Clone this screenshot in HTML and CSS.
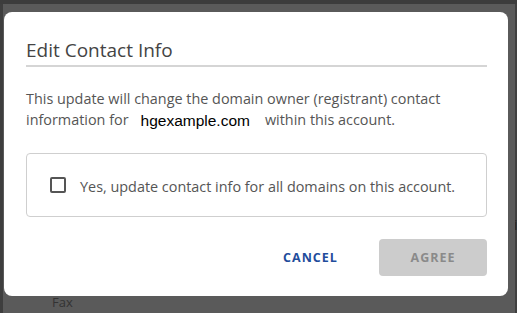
FILE: index.html
```html
<!DOCTYPE html>
<html>
<head>
<meta charset="utf-8">
<link rel="stylesheet" href="styles.css">
</head>
<body>
<div class="topbar"></div>
<div class="stage">
  <div class="leftstrip"></div>
  <div class="center">
    <div class="modal">
      <h2 class="title">Edit Contact Info</h2>
      <p class="text">This update will change the domain owner (registrant) contact information for<span class="domain">hgexample.com</span>within this account.</p>
      <label class="option">
        <span class="box"></span>
        <span class="option-text">Yes, update contact info for all domains on this account.</span>
      </label>
      <div class="actions">
        <button class="btn cancel">CANCEL</button>
        <button class="btn agree">AGREE</button>
      </div>
    </div>
    <div class="under">Fax</div>
  </div>
  <div class="rightstrip"><span class="peek">il</span></div>
</div>
</body>
</html>
```

FILE: styles.css
```css
html, body {
  margin: 0;
  padding: 0;
  width: 517px;
  height: 313px;
  overflow: hidden;
  background: #5a5a5a;
  font-family: "Open Sans", "Noto Sans", sans-serif;
}
.topbar {
  height: 4px;
  background: #3c3c3c;
}
.stage {
  display: flex;
  height: 309px;
}
.leftstrip {
  width: 3px;
  background: #3e3e3e;
  flex: none;
}
.rightstrip {
  flex: none;
  width: 3px;
  margin-left: 6px;
  background: #404040;
  overflow: hidden;
  padding-top: 213px;
}
.peek {
  display: block;
  margin-left: -1px;
  font-size: 14px;
  line-height: 16px;
  color: #222;
}
.center {
  flex: none;
  width: 505px;
  padding-left: 1px;
  padding-top: 8px;
}
.modal {
  box-sizing: border-box;
  width: 504px;
  height: 284px;
  background: #fff;
  border-radius: 8px;
  padding: 0 21px 0 22px;
  display: flex;
  flex-direction: column;
}
.title {
  margin: 0;
  padding-top: 26px;
  padding-bottom: 3px;
  font-size: 19px;
  font-weight: 400;
  color: #444;
  line-height: 24px;
  border-bottom: 2px solid #d5d5d5;
}
.text {
  margin: 21px 0 0;
  font-size: 14.4px;
  line-height: 21px;
  color: #555;
}
.domain {
  display: inline-block;
  font-family: "Liberation Sans", Arial, sans-serif;
  font-size: 15.5px;
  line-height: 17px;
  color: #000;
  margin: 0 15px 0 12px;
  position: relative;
  top: 1px;
}
.option {
  margin-top: 23px;
  box-sizing: border-box;
  height: 64px;
  border: 1px solid #cfcfcf;
  border-radius: 4px;
  display: flex;
  align-items: center;
  padding-left: 23px;
}
.box {
  box-sizing: border-box;
  width: 16px;
  height: 16px;
  border: 2px solid #555;
  border-radius: 2px;
  flex: none;
}
.option-text {
  margin-left: 14px;
  margin-top: 2px;
  font-size: 14.4px;
  line-height: 21px;
  color: #555;
}
.actions {
  margin-top: 22px;
  display: flex;
  justify-content: flex-end;
  align-items: center;
  gap: 24px;
}
.btn {
  font-family: "Open Sans", "Noto Sans", sans-serif;
  font-weight: 700;
  font-size: 12.5px;
  letter-spacing: 1px;
  border: none;
  background: none;
  padding: 0;
  cursor: pointer;
}
.cancel {
  color: #1f4d9c;
  width: 89px;
  height: 37px;
}
.agree {
  width: 108px;
  height: 37px;
  background: #cccccc;
  color: #8a8a8a;
  border-radius: 4px;
}
.under {
  padding-left: 48px;
  font-size: 13px;
  line-height: 16px;
  color: #333;
  margin-top: -2px;
}
```
